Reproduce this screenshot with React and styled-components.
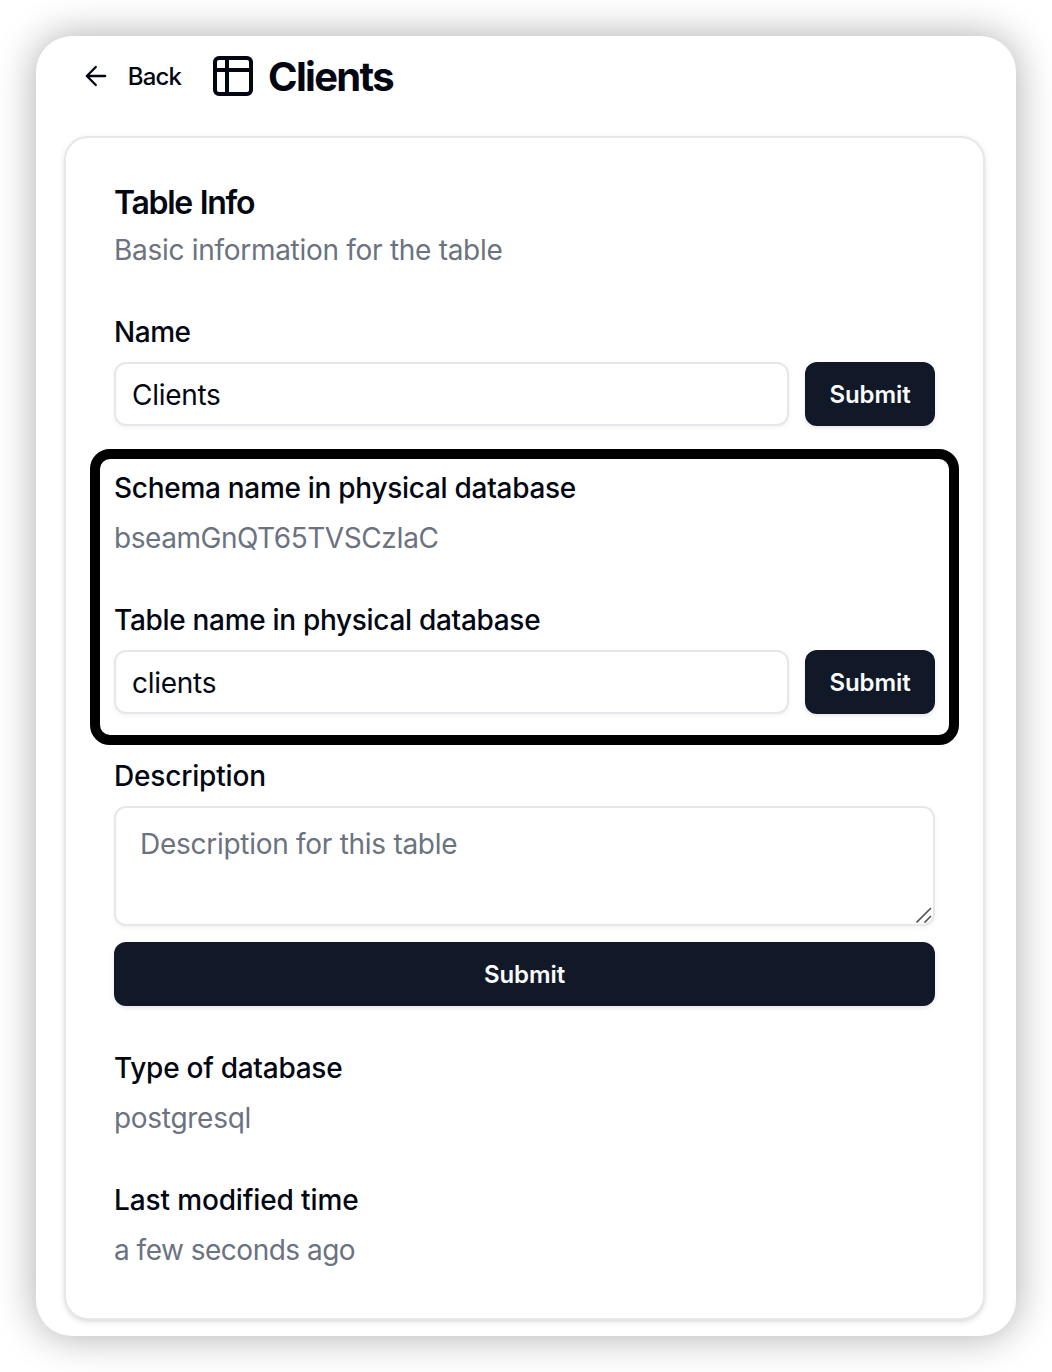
import React from "react";
import styled, { createGlobalStyle, css } from "styled-components";

const GlobalStyle = createGlobalStyle`
  *, *::before, *::after { box-sizing: border-box; }
  body {
    margin: 0;
    background: #ffffff;
    color: #030712;
    font-family: Inter, "Liberation Sans", sans-serif;
  }
`;

const Stage = styled.div`
  width: 1052px;
  height: 1372px;
  padding: 36px;
  overflow: hidden;
`;

const Window = styled.main`
  width: 980px;
  height: 1300px;
  padding: 0 31px 16px 28px;
  border-radius: 36px;
  background: #ffffff;
  box-shadow: 0 0 40px rgba(0, 0, 0, 0.33);
`;

const Header = styled.header`
  display: flex;
  align-items: center;
  height: 80px;
  margin-bottom: 20px;
  padding-left: 17px;
`;

const BackButton = styled.button`
  display: flex;
  align-items: center;
  gap: 16px;
  width: 100px;
  padding: 0;
  border: 0;
  background: none;
  color: inherit;
  font: 500 24px/32px Inter, sans-serif;
  letter-spacing: -0.85px;
  white-space: nowrap;
`;

const HeaderText = styled.span`
  padding-top: 2px;
`;

const PageTitle = styled.h1`
  display: flex;
  align-items: center;
  gap: 11px;
  margin: 0 0 0 28px;
  font-size: 40px;
  font-weight: 700;
  line-height: 54px;
  letter-spacing: -1.7px;
`;

const Card = styled.section`
  padding: 48px;
  border: 2px solid #e5e7eb;
  border-radius: 24px;
  background: #ffffff;
  box-shadow: 0 2px 6px rgba(0, 0, 0, 0.1), 0 2px 4px -2px rgba(0, 0, 0, 0.1);
`;

const CardHeader = styled.div`
  display: flex;
  flex-direction: column;
  gap: 12px;
  margin-bottom: 48px;
`;

const CardTitle = styled.h2`
  height: 32px;
  margin: 0;
  font-size: 32px;
  font-weight: 600;
  line-height: 34px;
  letter-spacing: -1.3px;
  word-spacing: 1px;
`;

const Muted = styled.p`
  margin: 0;
  color: #6b7280;
  font-size: 28px;
  line-height: 40px;
  letter-spacing: ${(p) => p.$tracking || "-0.29px"};
`;

const Stack = styled.div`
  display: flex;
  flex-direction: column;
  gap: 48px;
`;

const HighlightGroup = styled(Stack)`
  position: relative;

  &::after {
    content: "";
    position: absolute;
    inset: -25px -24px -31px;
    border: 10px solid #000000;
    border-radius: 20px;
    pointer-events: none;
  }
`;

const Field = styled.div`
  display: flex;
  flex-direction: column;
  gap: 16px;
`;

const Label = styled.label`
  font-size: 28px;
  font-weight: 500;
  line-height: 28px;
  letter-spacing: ${(p) => p.$tracking || "-0.29px"};
`;

const InputRow = styled.div`
  display: flex;
  gap: 16px;
`;

const control = css`
  border: 2px solid #e5e7eb;
  border-radius: 12px;
  background: transparent;
  color: inherit;
  font: 400 28px/40px Inter, sans-serif;
  letter-spacing: -0.28px;
  box-shadow: 0 2px 4px rgba(0, 0, 0, 0.05);
  outline: none;
`;

const Input = styled.input`
  ${control}
  flex: 1;
  min-width: 0;
  height: 64px;
  padding: 2px 16px 0;
`;

const TextAreaWrap = styled.div`
  position: relative;
  height: 120px;
`;

const TextArea = styled.textarea`
  ${control}
  display: block;
  width: 100%;
  height: 120px;
  padding: 16px 24px;
  resize: none;

  &::placeholder { color: #6b7280; opacity: 1; }
`;

const Grip = styled.svg`
  position: absolute;
  right: 3px;
  bottom: 3px;
  pointer-events: none;
`;

const Submit = styled.button`
  width: ${(p) => (p.$wide ? "100%" : "130px")};
  height: 64px;
  padding: 2px 0 0;
  border: 0;
  border-radius: 12px;
  background: #111827;
  color: #f9fafb;
  font: 600 24px/32px Inter, sans-serif;
  letter-spacing: -0.1px;
  box-shadow: 0 2px 4px rgba(0, 0, 0, 0.1);
`;

const ArrowIcon = () => (
  <svg width="32" height="32" viewBox="0 0 32 32" fill="none" stroke="currentColor" strokeWidth="2.4" strokeLinecap="round" strokeLinejoin="round">
    <path d="M25.2 16H6.2M15.4 6.6 6.1 16l9.3 9.4" />
  </svg>
);

const TableIcon = () => (
  <svg width="48" height="48" viewBox="0 0 24 24" fill="none" stroke="currentColor" strokeWidth="2" strokeLinecap="round" strokeLinejoin="round">
    <rect x="3" y="3" width="18" height="18" rx="2" />
    <path d="M3 9h18M9 3v18" />
  </svg>
);

export default function App() {
  return (
    <Stage>
      <GlobalStyle />
      <Window>
        <Header>
          <BackButton type="button">
            <ArrowIcon />
            <HeaderText>Back</HeaderText>
          </BackButton>
          <PageTitle>
            <TableIcon />
            <HeaderText>Clients</HeaderText>
          </PageTitle>
        </Header>
        <Card>
          <CardHeader>
            <CardTitle>Table Info</CardTitle>
            <Muted>Basic information for the table</Muted>
          </CardHeader>
          <Stack>
            <Field>
              <Label htmlFor="name" $tracking="-0.45px">Name</Label>
              <InputRow>
                <Input id="name" defaultValue="Clients" />
                <Submit type="button">Submit</Submit>
              </InputRow>
            </Field>
            <HighlightGroup>
              <Field>
                <Label as="div">Schema name in physical database</Label>
                <Muted $tracking="-0.46px">bseamGnQT65TVSCzIaC</Muted>
              </Field>
              <Field>
                <Label htmlFor="table-name" $tracking="-0.31px">Table name in physical database</Label>
                <InputRow>
                  <Input id="table-name" defaultValue="clients" />
                  <Submit type="button">Submit</Submit>
                </InputRow>
              </Field>
            </HighlightGroup>
            <Field>
              <Label htmlFor="description" $tracking="-0.18px">Description</Label>
              <TextAreaWrap>
                <TextArea id="description" placeholder="Description for this table" />
                <Grip width="16" height="16" viewBox="0 0 16 16" stroke="#555555" strokeWidth="1.7">
                  <path d="M0.5 15.5 15 1M8.5 15.5 15 9" />
                </Grip>
              </TextAreaWrap>
              <Submit type="button" $wide>Submit</Submit>
            </Field>
            <Field>
              <Label as="div" $tracking="-0.27px">Type of database</Label>
              <Muted>postgresql</Muted>
            </Field>
            <Field>
              <Label as="div" $tracking="-0.13px">Last modified time</Label>
              <Muted $tracking="-0.5px">a few seconds ago</Muted>
            </Field>
          </Stack>
        </Card>
      </Window>
    </Stage>
  );
}
